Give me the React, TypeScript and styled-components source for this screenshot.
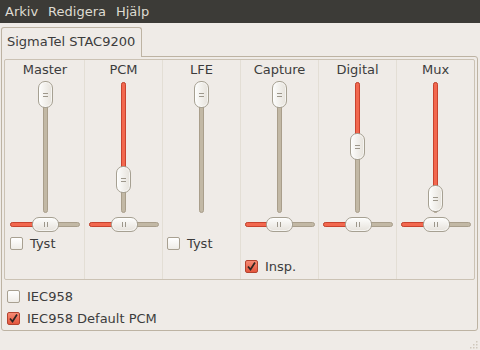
import React from 'react';
import styled, { createGlobalStyle } from 'styled-components';

const GlobalStyle = createGlobalStyle`
  html, body {
    margin: 0;
    padding: 0;
  }
  body {
    background: #efebe7;
    font-family: "DejaVu Sans", "Liberation Sans", sans-serif;
    font-size: 13px;
    color: #3c3c3c;
  }
`;

const Window = styled.div`
  width: 480px;
  height: 350px;
  display: flex;
  flex-direction: column;
  overflow: hidden;
  background: #efebe7;
`;

const MenuBar = styled.div`
  height: 23px;
  background: #3c3b37;
  display: flex;
  align-items: center;
  gap: 10px;
  padding-left: 5px;
`;

const MenuItem = styled.span`
  color: #dfdbd2;
  line-height: 23px;
`;

const Body = styled.div`
  padding: 4px 2px 0 1px;
  display: flex;
  flex-direction: column;
`;

const TabStrip = styled.div`
  display: flex;
  margin-bottom: -1px;
`;

const Tab = styled.div`
  box-sizing: border-box;
  width: 141px;
  height: 30px;
  padding: 0 5px;
  border: 1px solid #bdb3a3;
  border-bottom: none;
  border-radius: 3px 3px 0 0;
  background: #efebe7;
  line-height: 28px;
  white-space: nowrap;
  position: relative;
  z-index: 1;
`;

const Notebook = styled.div`
  border: 1px solid #bdb3a3;
  border-radius: 0 3px 3px 3px;
  padding: 2px 2px 1px 2px;
  display: flex;
  flex-direction: column;
`;

const MixerFrame = styled.div`
  box-sizing: border-box;
  height: 221px;
  border: 1px solid #cbc2b4;
  border-radius: 2px;
  padding-left: 1px;
  display: grid;
  grid-template-columns: repeat(6, 78px);
`;

const Channel = styled.div<{ $first: boolean }>`
  display: flex;
  flex-direction: column;
  border-left: ${(p) => (p.$first ? 'none' : '1px solid #e3ded5')};
`;

const Label = styled.div`
  margin-top: 2px;
  height: 16px;
  line-height: 16px;
  text-align: center;
`;

const VSlider = styled.div`
  position: relative;
  align-self: center;
  margin-top: 3px;
  width: 15px;
  height: 132px;
`;

const Trough = styled.div<{ $vertical: boolean }>`
  position: absolute;
  box-sizing: border-box;
  background: #c2b8a5;
  border: 1px solid #a99e8b;
  border-radius: 3px;
  ${(p) =>
    p.$vertical
      ? 'left: 5px; width: 5px; top: 1px; bottom: 0;'
      : 'top: 6px; height: 5px; left: 0; right: 0;'}
`;

const Fill = styled.div<{ $vertical: boolean }>`
  position: absolute;
  box-sizing: border-box;
  background: #f2684f;
  border: 1px solid #c9432f;
  border-radius: 3px;
  ${(p) => (p.$vertical ? 'left: 5px; width: 5px; top: 1px;' : 'top: 6px; height: 5px; left: 0;')}
`;

const Thumb = styled.div<{ $vertical: boolean }>`
  position: absolute;
  box-sizing: border-box;
  width: ${(p) => (p.$vertical ? '15px' : '27px')};
  height: ${(p) => (p.$vertical ? '27px' : '15px')};
  border: 1px solid #a6a092;
  border-radius: 7px;
  background: linear-gradient(${(p) => (p.$vertical ? '90deg' : '180deg')}, #fdfdfc, #e6e2db);
  box-shadow: inset 0 0 0 1px rgba(255, 255, 255, 0.6);
  display: flex;
  align-items: center;
  justify-content: center;
  ${(p) => (p.$vertical ? 'left: 0;' : 'top: 1px;')}

  &::before {
    content: '';
    box-sizing: border-box;
    ${(p) =>
      p.$vertical
        ? 'width: 5px; height: 4px; border-top: 1px solid #9d978b; border-bottom: 1px solid #9d978b;'
        : 'width: 4px; height: 5px; border-left: 1px solid #9d978b; border-right: 1px solid #9d978b;'}
  }
`;

const HSlider = styled.div`
  position: relative;
  align-self: center;
  margin-top: 3px;
  width: 70px;
  height: 16px;
`;

const RowSpacer = styled.div<{ $h: number; $mt: number }>`
  height: ${(p) => p.$h}px;
  margin-top: ${(p) => p.$mt}px;
  display: flex;
  align-items: center;
  padding-left: 4px;
`;

const CheckRow = styled.label<{ $pad: number }>`
  display: flex;
  align-items: center;
  gap: 7px;
  height: 22px;
  padding-left: ${(p) => p.$pad}px;
`;

const SwitchList = styled.div`
  margin-top: 5px;
  display: flex;
  flex-direction: column;
`;

const Box = styled.span<{ $checked: boolean }>`
  box-sizing: border-box;
  width: 13px;
  height: 13px;
  border-radius: 2px;
  border: 1px solid ${(p) => (p.$checked ? '#b4432f' : '#a8a091')};
  background: ${(p) =>
    p.$checked ? 'linear-gradient(#f68b74, #e4563d)' : 'linear-gradient(#ffffff, #efece7)'};
  display: flex;
  align-items: center;
  justify-content: center;
  flex-shrink: 0;
`;

const Footer = styled.div`
  flex: 1;
  display: flex;
  justify-content: flex-end;
  align-items: flex-end;
  padding: 0 2px 1px 0;
`;

const Check: React.FC<{ checked?: boolean }> = ({ checked = false }) => (
  <Box $checked={checked}>
    {checked && (
      <svg width="11" height="11" viewBox="0 0 11 11">
        <path d="M2 5.5 L4.5 8.5 L9 1.5" fill="none" stroke="#2f2522" strokeWidth="1.7" />
      </svg>
    )}
  </Box>
);

const Grip = () => (
  <svg width="10" height="10" viewBox="0 0 10 10">
    {[
      [8, 2], [8, 5], [5, 5], [8, 8], [5, 8], [2, 8],
    ].map(([x, y]) => (
      <rect key={`${x}-${y}`} x={x} y={y} width="1.5" height="1.5" fill="#cfc8bc" />
    ))}
  </svg>
);

type ChannelData = {
  name: string;
  level: number; // thumb top offset in px
  balance?: number; // thumb left offset in px
  mute?: boolean;
  capture?: boolean;
};

const channels: ChannelData[] = [
  { name: 'Master', level: 0, balance: 22, mute: true },
  { name: 'PCM', level: 85, balance: 22 },
  { name: 'LFE', level: 0, mute: true },
  { name: 'Capture', level: 0, balance: 21, capture: true },
  { name: 'Digital', level: 52, balance: 22 },
  { name: 'Mux', level: 104, balance: 22 },
];

const ChannelStrip: React.FC<{ ch: ChannelData; first: boolean }> = ({ ch, first }) => (
  <Channel $first={first}>
    <Label>{ch.name}</Label>
    <VSlider>
      <Trough $vertical />
      {ch.level > 0 && <Fill $vertical style={{ height: ch.level + 12 }} />}
      <Thumb $vertical style={{ top: ch.level }} />
    </VSlider>
    {ch.balance !== undefined ? (
      <HSlider>
        <Trough $vertical={false} />
        <Fill $vertical={false} style={{ width: ch.balance + 12 }} />
        <Thumb $vertical={false} style={{ left: ch.balance }} />
      </HSlider>
    ) : (
      <RowSpacer $h={16} $mt={3} />
    )}
    <RowSpacer $h={18} $mt={2}>
      {ch.mute && (
        <CheckRow $pad={0}>
          <Check />
          Tyst
        </CheckRow>
      )}
    </RowSpacer>
    <RowSpacer $h={20} $mt={4}>
      {ch.capture && (
        <CheckRow $pad={0}>
          <Check checked />
          Insp.
        </CheckRow>
      )}
    </RowSpacer>
  </Channel>
);

export default function App() {
  return (
    <Window>
      <GlobalStyle />
      <MenuBar>
        <MenuItem>Arkiv</MenuItem>
        <MenuItem>Redigera</MenuItem>
        <MenuItem>Hjälp</MenuItem>
      </MenuBar>
      <Body>
        <TabStrip>
          <Tab>SigmaTel STAC9200</Tab>
        </TabStrip>
        <Notebook>
          <MixerFrame>
            {channels.map((ch, i) => (
              <ChannelStrip key={ch.name} ch={ch} first={i === 0} />
            ))}
          </MixerFrame>
          <SwitchList>
            <CheckRow $pad={3}>
              <Check />
              IEC958
            </CheckRow>
            <CheckRow $pad={3}>
              <Check checked />
              IEC958 Default PCM
            </CheckRow>
          </SwitchList>
        </Notebook>
      </Body>
      <Footer>
        <Grip />
      </Footer>
    </Window>
  );
}
